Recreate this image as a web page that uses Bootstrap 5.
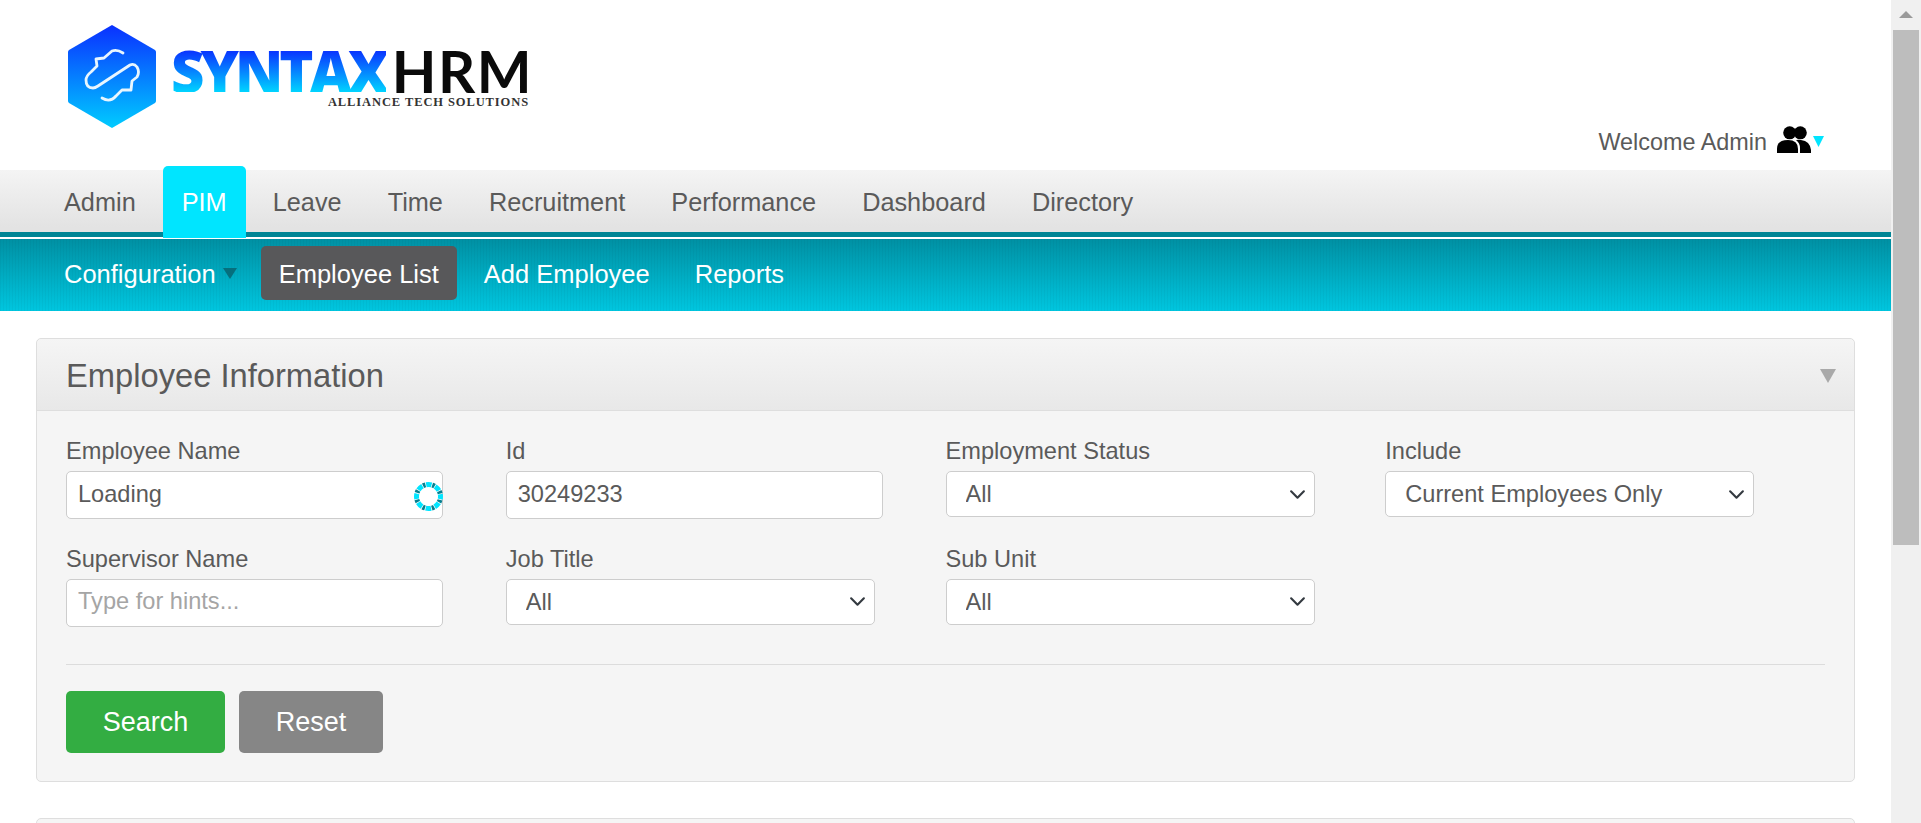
<!DOCTYPE html>
<html lang="en">
<head>
    <meta charset="UTF-8">
    <meta name="viewport" content="width=device-width, initial-scale=1.0">
    <title>Employee List</title>
    <link href="https://cdn.jsdelivr.net/npm/bootstrap@5.3.0/dist/css/bootstrap.min.css" rel="stylesheet">
    <style>
        html, body { height: 100%; overflow: hidden; }
        body {
            font-family: "Liberation Sans", Arial, sans-serif;
            font-size: 23.6px;
            color: #5a5a5a;
            background: #fff;
        }
        .page-wrap { height: 823px; overflow: hidden; }
        .page-main { width: 1891px; height: 823px; overflow: hidden; }

        /* fake scrollbar */
        .fake-scroll { width: 30px; height: 823px; background: #f0f0f0; }
        .fake-arrow { height: 30px; }
        .fake-track { padding: 0 2px; }
        .fake-thumb { height: 515px; background: #bdbdbd; }

        /* header */
        .top-head { height: 170px; }
        .logo-box { padding: 25px 0 0 67px; }
        .logo-words { margin: 25px 0 0 14px; width: 366px; }
        .logo-syntax {
            font-family: "Open Sans", "Liberation Sans", sans-serif;
            font-weight: 800;
            font-size: 58px;
            line-height: 42px;
            letter-spacing: -4px;
            background: linear-gradient(#0a30ff, #00d4ff);
            -webkit-background-clip: text;
            background-clip: text;
            color: transparent;
        }
        .logo-hrm {
            font-family: Lato, "Liberation Sans", sans-serif;
            font-weight: 700;
            font-size: 58px;
            line-height: 42px;
            color: #0a0a0a;
            margin-left: 6px;
            letter-spacing: 1.5px;
        }
        .logo-sub {
            font-family: "Liberation Serif", serif;
            font-weight: 700;
            font-size: 12.5px;
            line-height: 10px;
            letter-spacing: .9px;
            color: #333;
            text-align: right;
            margin-top: 5px;
            padding-right: 8px;
            white-space: nowrap;
        }
        .welcome-box { padding: 126px 67px 0 0; line-height: 32px; font-size: 23.4px; }
        .welcome-box svg { margin-left: 10px; }
        .welcome-box svg.welcome-caret { margin-left: 2px; }

        /* menus */
        .menu-main {
            height: 67px;
            padding-left: 45px;
            gap: 8px;
            background: linear-gradient(#f4f4f4, #e3e3e3 92%);
            border-bottom: 5px solid #008595;
        }
        .menu-main .nav-link {
            font-size: 25.3px;
            line-height: 1;
            color: #5a5a5a;
            padding: 20px 19px 0;
            height: 62px;
        }
        .menu-main .nav-link.active {
            height: 72px;
            margin-top: -4px;
            padding-top: 24px;
            color: #fff;
            background: #00e5ff;
            border-radius: 5px 5px 0 0;
            position: relative;
        }
        .menu-sub {
            margin-top: 2px;
            height: 72px;
            padding: 7px 0 0 45px;
            gap: 9px;
            background:
                repeating-linear-gradient(90deg, rgba(0,0,0,.03) 0 1px, transparent 1px 3px),
                linear-gradient(#0090a3, #00c6df);
        }
        .menu-sub .nav-link {
            font-size: 25.5px;
            line-height: 1;
            color: #fff;
            height: 54px;
            padding: 16px 18px 0;
            border-radius: 5px;
        }
        .menu-sub .nav-link.first-link { padding-left: 19px; padding-right: 15px; }
        .menu-sub .nav-link.active { background: #58585a; color: #fff; }
        .caret-dark {
            display: inline-block;
            width: 0; height: 0;
            margin-left: 7px;
            vertical-align: 4px;
            border: 7px solid transparent;
            border-top: 11px solid #066f7d;
            border-bottom: 0;
        }

        /* search panel */
        .info-panel {
            margin: 27px 36px 0;
            background: #f5f5f5;
            border: 1px solid #dedede;
            border-radius: 5px;
        }
        .info-head {
            height: 72px;
            padding: 3px 18px 0 29px;
            background: linear-gradient(#f5f5f5, #e8e8e8);
            border-bottom: 1px solid #dedede;
            border-radius: 5px 5px 0 0;
        }
        .info-title { font-size: 32.7px; font-weight: 400; line-height: 1; margin: 0; color: #5a5a5a; }
        .caret-grey {
            width: 0; height: 0;
            border: 8px solid transparent;
            border-top: 14px solid #a9a9a9;
            border-bottom: 0;
        }
        .info-body { padding: 24px 29px 28px; }
        .filter-cell { height: 107.5px; }
        .filter-cell .form-label { display: block; line-height: 33px; margin: 0 0 3px; color: #5a5a5a; font-size: 23.6px; }
        .txt-wrap { position: relative; width: 377px; }
        .txt-field {
            height: 48px;
            font-size: 23.6px;
            padding: 0 11px 2px;
            color: #5a5a5a;
            border: 1px solid #cdcdcd;
            border-radius: 5px;
        }
        .txt-field::placeholder { color: #a5a5a5; opacity: 1; }
        .loader-ring { position: absolute; right: 0; top: 11px; }
        .pick-field {
            width: 369px;
            height: 46px;
            margin-top: 2px;
            font-size: 23.6px;
            padding: 2px 30px 0 19px;
            color: #5a5a5a;
            border: 1px solid #cdcdcd;
            border-radius: 5px;
            background-position: right 8px center;
            background-size: 17px 17px;
        }
        .panel-rule { margin: 14px 0 26px; border: 0; border-top: 1px solid #dcdcdc; opacity: 1; }
        .act-row { gap: 14px; }
        .act-btn {
            height: 62px;
            font-size: 27px;
            line-height: 1;
            color: #fff;
            border: 0;
            border-radius: 5px;
        }
        .act-btn:hover { color: #fff; }
        .act-search { width: 159px; background: #33ad42; }
        .act-search:hover { background: #33ad42; }
        .act-reset { width: 144px; background: #868686; }
        .act-reset:hover { background: #868686; }
        .next-panel { height: 40px; margin-top: 36px; }
    </style>
</head>
<body>
<div class="page-wrap d-flex">
    <div class="page-main flex-shrink-0">
        <header class="top-head d-flex justify-content-between">
            <div class="logo-box d-flex align-items-start">
                <svg width="90" height="103" viewBox="0 0 90 103">
                    <defs>
                        <linearGradient id="hexFill" x1="0" y1="0" x2="0" y2="1">
                            <stop offset="0" stop-color="#0a30ff"/>
                            <stop offset="1" stop-color="#00ccff"/>
                        </linearGradient>
                    </defs>
                    <path d="M45 0 L88 25 Q89 26 89 27 L89 76 Q89 77 88 78 L45 103 L2 78 Q1 77 1 76 L1 27 Q1 26 2 25 Z" fill="url(#hexFill)"/>
                    <path d="M56 28 Q50 24 45 26 L37 33 L29 34 L30 41 L24 47 Q19 51 19 55 Q19 63 26 63 Q28 63 31 61 L63 40 Q67 38 70 42 Q73 47 70 52 L65 56 L64 65 L55 65 L49 71 Q43 78 35 73" fill="none" stroke="#e8f6ff" stroke-width="2.800" stroke-linecap="round" stroke-linejoin="round"/>
                </svg>
                <div class="logo-words">
                    <div class="d-flex"><span class="logo-syntax">SYNTAX</span><span class="logo-hrm">HRM</span></div>
                    <div class="logo-sub">ALLIANCE TECH SOLUTIONS</div>
                </div>
            </div>
            <div class="welcome-box d-flex align-items-start">
                <span>Welcome Admin</span>
                <svg width="34" height="28" viewBox="0 0 34 28" fill="#000">
                    <circle cx="12.700" cy="6.800" r="6.500"/>
                    <circle cx="23.300" cy="6.800" r="6.500"/>
                    <path d="M0 27 V23 Q0 14 11 14 Q21 14 21 23 V27 Z"/>
                    <path d="M23 27 V22 Q23 17 19 14 Q22 13.500 24 14 Q33 15 34 24 V27 Z"/>
                </svg>
                <svg class="welcome-caret" width="11" height="32" viewBox="0 0 11 32"><path d="M0 10 H11 L5.500 21 Z" fill="#00e5ff"/></svg>
            </div>
        </header>

        <nav class="nav menu-main">
            <a class="nav-link" href="#">Admin</a>
            <a class="nav-link active" href="#">PIM</a>
            <a class="nav-link" href="#">Leave</a>
            <a class="nav-link" href="#">Time</a>
            <a class="nav-link" href="#">Recruitment</a>
            <a class="nav-link" href="#">Performance</a>
            <a class="nav-link" href="#">Dashboard</a>
            <a class="nav-link" href="#">Directory</a>
        </nav>
        <nav class="nav menu-sub">
            <a class="nav-link first-link" href="#">Configuration<span class="caret-dark"></span></a>
            <a class="nav-link active" href="#">Employee List</a>
            <a class="nav-link" href="#">Add Employee</a>
            <a class="nav-link" href="#">Reports</a>
        </nav>

        <section class="info-panel">
            <div class="info-head d-flex align-items-center justify-content-between">
                <h1 class="info-title">Employee Information</h1>
                <span class="caret-grey"></span>
            </div>
            <div class="info-body">
                <form>
                    <div class="row g-0">
                        <div class="col-3 filter-cell">
                            <label class="form-label" for="empName">Employee Name</label>
                            <div class="txt-wrap">
                                <input class="form-control txt-field" id="empName" type="text" value="Loading">
                                <svg class="loader-ring" width="29" height="29" viewBox="0 0 29 29" fill="none" stroke-width="5">
                                    <circle cx="14.500" cy="14.500" r="12" stroke="#00e5ff" stroke-dasharray="5.500 3.925" stroke-dashoffset="2.750"/>
                                    <circle cx="14.500" cy="14.500" r="12" stroke="#057f90" stroke-dasharray="2.500 6.925" stroke-dashoffset="5.960"/>
                                </svg>
                            </div>
                        </div>
                        <div class="col-3 filter-cell">
                            <label class="form-label" for="empId">Id</label>
                            <div class="txt-wrap"><input class="form-control txt-field" id="empId" type="text" value="30249233"></div>
                        </div>
                        <div class="col-3 filter-cell">
                            <label class="form-label" for="empStatus">Employment Status</label>
                            <select class="form-select pick-field" id="empStatus"><option>All</option></select>
                        </div>
                        <div class="col-3 filter-cell">
                            <label class="form-label" for="empInclude">Include</label>
                            <select class="form-select pick-field" id="empInclude"><option>Current Employees Only</option></select>
                        </div>
                        <div class="col-3 filter-cell">
                            <label class="form-label" for="supName">Supervisor Name</label>
                            <div class="txt-wrap"><input class="form-control txt-field" id="supName" type="text" placeholder="Type for hints..."></div>
                        </div>
                        <div class="col-3 filter-cell">
                            <label class="form-label" for="jobTitle">Job Title</label>
                            <select class="form-select pick-field" id="jobTitle"><option>All</option></select>
                        </div>
                        <div class="col-3 filter-cell">
                            <label class="form-label" for="subUnit">Sub Unit</label>
                            <select class="form-select pick-field" id="subUnit"><option>All</option></select>
                        </div>
                    </div>
                    <hr class="panel-rule">
                    <div class="d-flex act-row">
                        <button type="button" class="btn act-btn act-search">Search</button>
                        <button type="button" class="btn act-btn act-reset">Reset</button>
                    </div>
                </form>
            </div>
        </section>
        <section class="info-panel next-panel"></section>
    </div>
    <aside class="fake-scroll flex-shrink-0">
        <div class="fake-arrow d-flex align-items-center justify-content-center">
            <svg width="14" height="8" viewBox="0 0 14 8"><path d="M7 0 L14 7 H0 Z" fill="#9a9a9a"/></svg>
        </div>
        <div class="fake-track"><div class="fake-thumb"></div></div>
    </aside>
</div>
<script src="https://cdn.jsdelivr.net/npm/bootstrap@5.3.0/dist/js/bootstrap.bundle.min.js"></script>
</body>
</html>
